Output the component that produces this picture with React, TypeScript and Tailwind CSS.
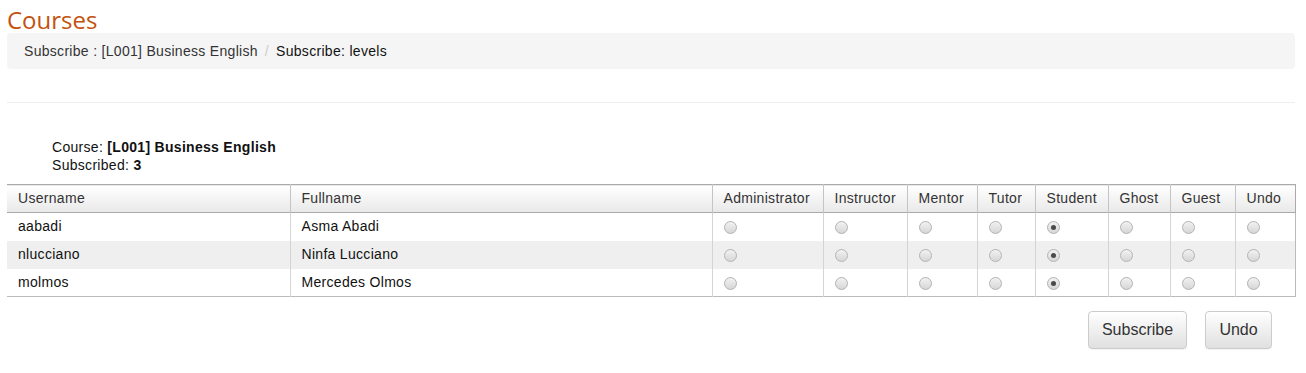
import React from 'react'

const roles = ['Administrator', 'Instructor', 'Mentor', 'Tutor', 'Student', 'Ghost', 'Guest', 'Undo']
const widths = ['w-[111px]', 'w-[84px]', 'w-[70px]', 'w-[58px]', 'w-[73px]', 'w-[62px]', 'w-[65px]', 'w-[60px]']

const users = [
  { username: 'aabadi', fullname: 'Asma Abadi', role: 'Student' },
  { username: 'nlucciano', fullname: 'Ninfa Lucciano', role: 'Student' },
  { username: 'molmos', fullname: 'Mercedes Olmos', role: 'Student' },
]

function Radio({ checked }: { checked: boolean }) {
  return (
    <span className="mt-[2px] flex h-[13px] w-[13px] items-center justify-center rounded-full border border-[#b4b4b4] bg-gradient-to-b from-[#f2f2f2] to-[#d6d6d6]">
      {checked && <span className="h-[5px] w-[5px] rounded-full bg-[#4a4a4a]" />}
    </span>
  )
}

export default function App() {
  return (
    <div className="min-h-[373px] bg-white pl-[7px] pr-[11px] font-['Liberation_Sans',Arial,sans-serif] text-[14px] tracking-[0.3px] text-[#333]">
      <h1 className="pt-[7px] font-['Open_Sans',sans-serif] text-[24px] leading-[26px] tracking-normal text-[#c3520e]">Courses</h1>

      <div className="flex items-center rounded-[4px] bg-[#f5f5f5] py-[8px] pl-[17px] leading-[20px]">
        <span className="text-[#333]">Subscribe : [L001] Business English</span>
        <span className="px-[7px] text-[#ccc]">/</span>
        <span className="text-[#111]">Subscribe: levels</span>
      </div>

      <div className="mt-[33px] h-px bg-[#eee]" />

      <div className="mt-[35px] pl-[45px] leading-[18px] text-[#111]">
        <div>
          Course: <b>[L001] Business English</b>
        </div>
        <div>
          Subscribed: <b>3</b>
        </div>
      </div>

      <table className="mt-[10px] w-full table-fixed border-collapse border-b border-[#bbb] text-left">
        <thead>
          <tr className="h-[28px] border-y border-[#aaa] bg-gradient-to-b from-white to-[#e9e9e9]">
            <th className="w-[283px] px-[11px] font-normal">Username</th>
            <th className="w-[422px] border-l border-[#c4c4c4] px-[11px] font-normal">Fullname</th>
            {roles.map((r, i) => (
              <th
                key={r}
                className={`${widths[i]} border-l border-[#c4c4c4] px-[11px] font-normal ${i === roles.length - 1 ? 'border-r border-r-[#aaa]' : ''}`}
              >
                {r}
              </th>
            ))}
          </tr>
        </thead>
        <tbody>
          {users.map((u, idx) => (
            <tr key={u.username} className={`h-[28px] ${idx === 1 ? 'bg-[#efefef]' : 'bg-white'}`}>
              <td className="px-[11px] text-[#111]">{u.username}</td>
              <td className="border-l border-[#d4d4d4] px-[11px] text-[#111]">{u.fullname}</td>
              {roles.map((r, i) => (
                <td
                  key={r}
                  className={`border-l border-[#d4d4d4] px-[11px] ${i === roles.length - 1 ? 'border-r border-r-[#bbb]' : ''}`}
                >
                  <Radio checked={u.role === r} />
                </td>
              ))}
            </tr>
          ))}
        </tbody>
      </table>

      <div className="mt-[14px] flex justify-end gap-[18px] pr-[23px] tracking-normal">
        <button className="h-[38px] w-[99px] rounded-[4px] border border-[#ccc] bg-gradient-to-b from-white to-[#e0e0e0] text-[16px] text-[#333] shadow-[0_1px_1px_rgba(0,0,0,0.05)]">
          Subscribe
        </button>
        <button className="h-[38px] w-[67px] rounded-[4px] border border-[#ccc] bg-gradient-to-b from-white to-[#e0e0e0] text-[16px] text-[#333] shadow-[0_1px_1px_rgba(0,0,0,0.05)]">
          Undo
        </button>
      </div>
    </div>
  )
}
